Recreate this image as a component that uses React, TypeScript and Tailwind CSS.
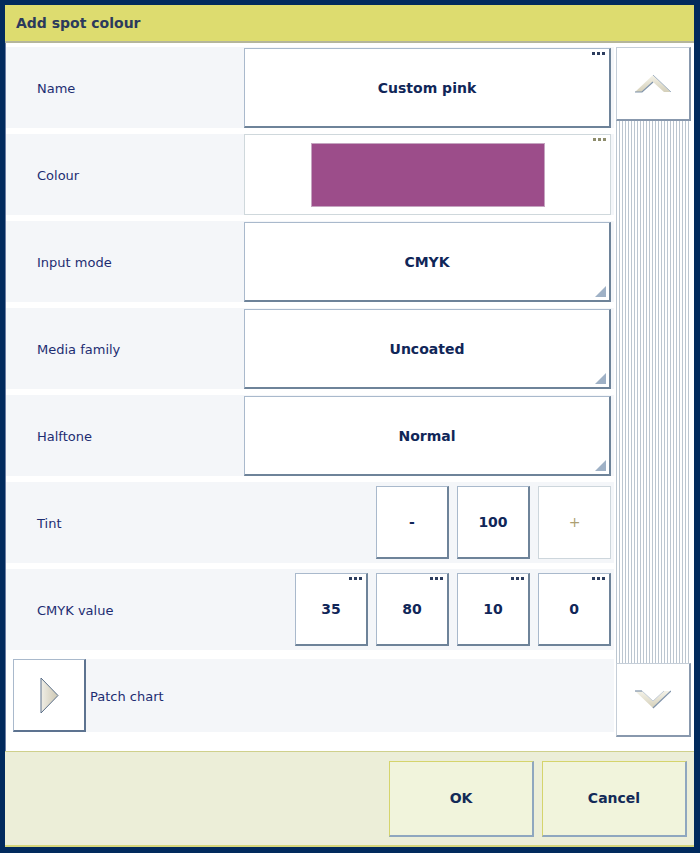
import type { ReactNode } from 'react';

const FONT = "font-['DejaVu_Sans',sans-serif]";

function Dots({ muted = false }: { muted?: boolean }) {
  const c = muted ? 'bg-[#8d8c6c]' : 'bg-[#2c3d5e]';
  return (
    <span className="absolute right-[4px] top-[3px] flex gap-[2px]">
      <span className={`h-[3px] w-[3px] ${c}`} />
      <span className={`h-[3px] w-[3px] ${c}`} />
      <span className={`h-[3px] w-[3px] ${c}`} />
    </span>
  );
}

function Corner() {
  return (
    <svg className="absolute bottom-[3px] right-[3px]" width="11" height="11" viewBox="0 0 11 11">
      <polygon points="11,0 11,11 0,11" fill="#9fb1c6" />
    </svg>
  );
}

function Field({ children, dots, dropdown }: { children: ReactNode; dots?: boolean; dropdown?: boolean }) {
  return (
    <div className="relative flex h-[80px] w-[367px] items-center justify-center border-l border-t border-[#a9b9cc] border-b-2 border-r-2 border-b-[#6e8399] border-r-[#6e8399] bg-white pt-[2px] text-[14px] font-bold text-[#102658]">
      {children}
      {dots && <Dots />}
      {dropdown && <Corner />}
    </div>
  );
}

function Box({ children, dots, disabled }: { children: ReactNode; dots?: boolean; disabled?: boolean }) {
  return (
    <div
      className={`relative flex h-[73px] w-[73px] items-center justify-center bg-white text-[14px] font-bold ${
        disabled
          ? 'border border-[#cdd6dc] font-normal text-[#ad9f72]'
          : 'border-l border-t border-[#a9b9cc] border-b-2 border-r-2 border-b-[#6e8399] border-r-[#6e8399] text-[#102658]'
      }`}
    >
      {children}
      {dots && <Dots />}
    </div>
  );
}

function Row({ label, children, right }: { label: string; children: ReactNode; right?: boolean }) {
  return (
    <div className="flex h-[81px] items-center bg-[#f4f6f9] pr-[3px]">
      <div className="w-[238px] pl-[31px] pt-[2px] text-[13px] text-[#1d2d72]">{label}</div>
      <div className={`flex flex-1 ${right ? 'justify-end gap-[8px]' : ''}`}>{children}</div>
    </div>
  );
}

function ScrollBtn({ up }: { up?: boolean }) {
  return (
    <div className="flex h-[74px] items-center justify-center border border-[#c5ced8] border-b-2 border-r-2 border-b-[#8898ad] border-r-[#8898ad] bg-white">
      <svg width="36" height="21" viewBox="0 0 36 21">
        <defs>
          <linearGradient id={up ? 'cu' : 'cd'} x1="0" y1="0" x2="0" y2="1">
            <stop offset="0" stopColor="#f4f2e8" />
            <stop offset="1" stopColor="#d5d0ba" />
          </linearGradient>
        </defs>
        {up ? (
          <>
            <polygon points="0,19 18,2 36,19 29,19 18,9 7,19" fill="url(#cu)" />
            <polyline points="0,19 7,19 18,9" fill="none" stroke="#7f93ab" strokeWidth="1.2" />
            <polyline points="18,2 36,19" fill="none" stroke="#a2b2c4" strokeWidth="1" />
          </>
        ) : (
          <>
            <polygon points="0,2 7,2 18,12 29,2 36,2 18,19" fill="url(#cd)" />
            <polyline points="0,2 7,2" fill="none" stroke="#7f93ab" strokeWidth="1.2" />
            <polyline points="18,19 36,2" fill="none" stroke="#7f93ab" strokeWidth="1.2" />
            <polyline points="7,2 18,12 29,2" fill="none" stroke="#c3cdd8" strokeWidth="1" />
          </>
        )}
      </svg>
    </div>
  );
}

function FooterBtn({ children }: { children: ReactNode }) {
  return (
    <button className="flex h-[76px] w-[145px] items-center justify-center border-l border-t border-[#d5d46c] border-b-2 border-r-2 border-b-[#8fa7bf] border-r-[#8fa7bf] bg-[#f1f4dc] text-[14px] font-bold text-[#132a57]">
      {children}
    </button>
  );
}

export default function App() {
  return (
    <div className={`h-[853px] w-[700px] bg-[#012a5d] pb-[6px] pl-[5px] pr-[6px] pt-[5px] ${FONT}`}>
      <div className="flex h-full flex-col bg-white">
        <div className="flex h-[38px] items-center border-b-2 border-[#b4b59c] bg-[#dddc6f] pl-[11px] text-[14px] font-bold text-[#2b3a5c]">
          Add spot colour
        </div>

        <div className="flex border-l border-[#6a7ea3] pb-[14px] pr-[3px] pt-[4px]">
          <div className="flex flex-1 flex-col gap-[6px] pb-[5px]">
            <Row label="Name">
              <Field dots>Custom pink</Field>
            </Row>
            <Row label="Colour">
              <div className="relative flex h-[81px] w-[367px] items-center justify-center border border-[#cfd8dc] bg-white">
                <div className="h-[64px] w-[234px] border border-[#c5a5c0] bg-[#9c4d8a]" />
                <Dots muted />
              </div>
            </Row>
            <Row label="Input mode">
              <Field dropdown>CMYK</Field>
            </Row>
            <Row label="Media family">
              <Field dropdown>Uncoated</Field>
            </Row>
            <Row label="Halftone">
              <Field dropdown>Normal</Field>
            </Row>
            <Row label="Tint" right>
              <Box>-</Box>
              <Box>100</Box>
              <Box disabled>+</Box>
            </Row>
            <Row label="CMYK value" right>
              <Box dots>35</Box>
              <Box dots>80</Box>
              <Box dots>10</Box>
              <Box dots>0</Box>
            </Row>
            <div className="mt-[3px] flex h-[73px] items-center pl-[7px]">
              <div className="flex h-[73px] w-[73px] items-center justify-center border-l border-t border-[#a9b9cc] border-b-2 border-r-2 border-b-[#5d7390] border-r-[#5d7390] bg-white">
                <svg width="19" height="37" viewBox="0 0 19 37">
                  <defs>
                    <linearGradient id="pt" x1="0" y1="0" x2="1" y2="0">
                      <stop offset="0" stopColor="#f0eee6" />
                      <stop offset="1" stopColor="#cdc7b2" />
                    </linearGradient>
                  </defs>
                  <polygon points="1,1 18,18.5 1,36" fill="url(#pt)" stroke="#5b6f89" strokeWidth="1" />
                </svg>
              </div>
              <div className="flex h-[73px] flex-1 items-center bg-[#f4f6f9] pl-[4px] pt-[2px] text-[13px] text-[#1d2d72]">
                Patch chart
              </div>
            </div>
          </div>

          <div className="ml-[2px] flex w-[75px] flex-col">
            <ScrollBtn up />
            <div className="flex-1 bg-[repeating-linear-gradient(90deg,#bcc6d0_0px,#bcc6d0_1px,#ffffff_1px,#ffffff_3px)]" />
            <ScrollBtn />
          </div>
        </div>

        <div className="flex flex-1 justify-end gap-[8px] border-b-2 border-t border-b-[#d6d67a] border-t-[#cfd08c] bg-[#eceed8] pr-[7px] pt-[9px]">
          <FooterBtn>OK</FooterBtn>
          <FooterBtn>Cancel</FooterBtn>
        </div>
      </div>
    </div>
  );
}
